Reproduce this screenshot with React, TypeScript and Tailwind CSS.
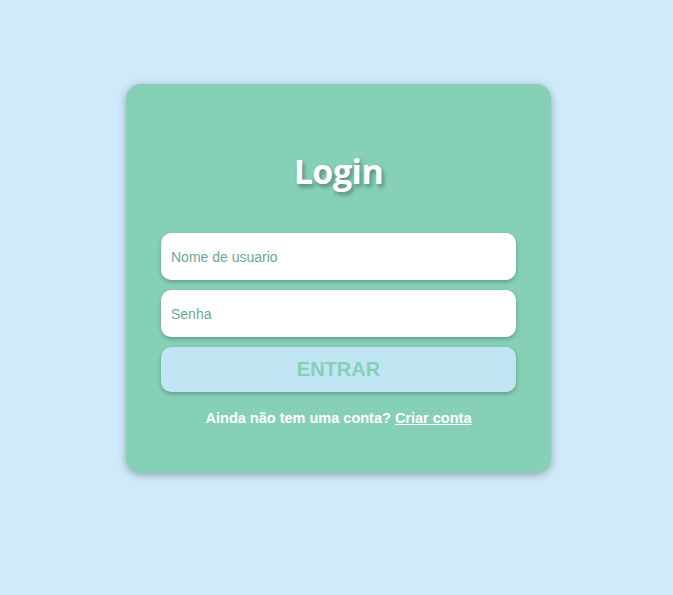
export default function App() {
  return (
    <div className="min-h-[595px] w-full bg-[#cfebf9] flex justify-center pt-[84px] pl-[4px]" style={{ fontFamily: '"Liberation Sans", Arial, sans-serif' }}>
      <div className="w-[425px] h-[389px] rounded-[15px] bg-[#86d0b7] shadow-[0_2px_8px_rgba(0,0,0,0.3)] px-[35px] pt-[70px] flex flex-col">
        <h1
          className="text-center text-white text-[34px] font-bold leading-none tracking-[-0.5px] [text-shadow:2px_3px_4px_rgba(0,0,0,0.35)]"
          style={{ fontFamily: '"Open Sans", sans-serif' }}
        >
          Login
        </h1>
        <form className="mt-[45px] flex flex-col gap-[10px]" onSubmit={(e) => e.preventDefault()}>
          <input
            autoFocus
            type="text"
            placeholder="Nome de usuario"
            className="h-[47px] w-full rounded-[10px] bg-white px-[10px] text-[14px] text-gray-700 placeholder:text-[#6aa89a] outline-none shadow-[0_2px_4px_rgba(0,0,0,0.25)] caret-[#4b9f8c]"
          />
          <input
            type="password"
            placeholder="Senha"
            className="h-[47px] w-full rounded-[10px] bg-white px-[10px] text-[14px] text-gray-700 placeholder:text-[#6aa89a] outline-none shadow-[0_2px_4px_rgba(0,0,0,0.25)]"
          />
          <button
            type="submit"
            className="h-[45px] w-full rounded-[10px] bg-[#c0e5f3] text-[#86d0b7] text-[20px] font-bold leading-none pb-[2px] shadow-[0_2px_4px_rgba(0,0,0,0.25)]"
          >
            ENTRAR
          </button>
        </form>
        <p className="mt-[16px] text-center text-white text-[14.5px] font-bold">
          Ainda não tem uma conta? <a href="#" className="underline">Criar conta</a>
        </p>
      </div>
    </div>
  );
}
